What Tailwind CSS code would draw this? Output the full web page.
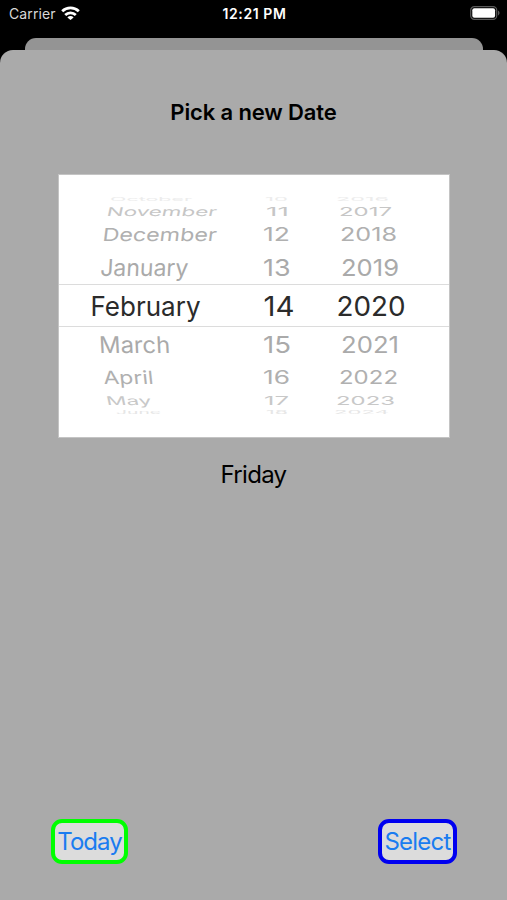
<!DOCTYPE html>
<html lang="en">
<head>
    <meta charset="UTF-8">
    <meta name="viewport" content="width=device-width, initial-scale=1.0">
    <title>Pick a new Date</title>
    <script src="https://cdn.jsdelivr.net/npm/@tailwindcss/browser@4"></script>
</head>
<body class="bg-black h-[900px] overflow-hidden flex flex-col font-['Inter',sans-serif]">
    <!-- Status bar -->
    <header class="h-[38px] shrink-0 grid grid-cols-3 items-start pt-1 pl-[9px] pr-[7px] text-white">
        <div class="flex items-center gap-[5px] h-5 -mt-px">
            <span class="text-[14px] tracking-[0.1px] text-[#d8d8d8]">Carrier</span>
            <svg class="w-[19px] h-[14px] -mt-px" viewBox="0 0 19 14" fill="none" stroke="white" stroke-width="2.8">
                <path d="M1.2 5.3a12 12 0 0 1 16.6 0" />
                <path d="M4.2 8.9a7.7 7.7 0 0 1 10.6 0" />
                <path d="M9.5 14L6.4 11.4a4.4 4.4 0 0 1 6.2 0z" fill="white" stroke="none" />
            </svg>
        </div>
        <span class="text-center text-[14px] leading-5 font-semibold tracking-[0.6px] whitespace-nowrap">12:21 PM</span>
        <svg class="w-[30px] h-[14px] mt-[2px] justify-self-end" viewBox="0 0 30 14">
            <rect x="0.7" y="0.7" width="26" height="12.6" rx="3.6" fill="none" stroke="#5a5a5a" stroke-width="1.2" />
            <rect x="2.3" y="2.3" width="22.8" height="9.4" rx="2" fill="white" />
            <path d="M28 4.6c2 .8 2 4 0 4.8z" fill="#5a5a5a" />
        </svg>
    </header>

    <!-- Card behind the sheet -->
    <div class="h-3 shrink-0 ml-[25px] mr-6 rounded-t-[11px] bg-[#949494]"></div>

    <main class="grow bg-[#aaaaaa] rounded-t-[13px] flex flex-col items-center">
        <h1 class="mt-[47px] text-[22px] leading-[30px] font-semibold tracking-[-0.13px] text-black">Pick a new Date</h1>

        <div class="mt-[47px] w-[392px] h-[264px] bg-white border border-[#c4c4c4]">
            <!-- Date wheel -->
            <svg class="w-[390px] h-[262px]" viewBox="59 175 390 262" fill="#aaaaaa">
                <path d="M59 284.5H449M59 326.5H449" stroke="#dcdcdc" />
                <g font-size="5" fill="#ececec">
                    <text x="110" y="200.5" textLength="82" lengthAdjust="spacingAndGlyphs">October</text>
                    <text x="265" y="200.5" textLength="23" lengthAdjust="spacingAndGlyphs">10</text>
                    <text x="336" y="200.5" textLength="53" lengthAdjust="spacingAndGlyphs">2016</text>
                </g>
                <g font-size="12.2" fill="#c6c6c6">
                    <text transform="translate(106 215.5) skewX(-12)" textLength="110" lengthAdjust="spacingAndGlyphs">November</text>
                    <text x="266" y="215.5" textLength="23" lengthAdjust="spacingAndGlyphs">11</text>
                    <text x="339" y="215.5" textLength="53" lengthAdjust="spacingAndGlyphs">2017</text>
                </g>
                <g font-size="18" fill="#b0b0b0">
                    <text transform="translate(102 241) skewX(-7)" textLength="114" lengthAdjust="spacingAndGlyphs">December</text>
                    <text x="263" y="241" textLength="27" lengthAdjust="spacingAndGlyphs">12</text>
                    <text x="340" y="241" textLength="57" lengthAdjust="spacingAndGlyphs">2018</text>
                </g>
                <g font-size="23.5">
                    <text transform="translate(100 276) skewX(-3)" textLength="88" lengthAdjust="spacingAndGlyphs">January</text>
                    <text x="263" y="276" textLength="27.5" lengthAdjust="spacingAndGlyphs">13</text>
                    <text x="341" y="276" textLength="58" lengthAdjust="spacingAndGlyphs">2019</text>
                </g>
                <g font-size="27" fill="#2b2b2b">
                    <text x="90.5" y="315.5" textLength="110" lengthAdjust="spacingAndGlyphs">February</text>
                    <text x="263.5" y="315.5" textLength="31" lengthAdjust="spacingAndGlyphs">14</text>
                    <text x="336.5" y="315.5" textLength="69" lengthAdjust="spacingAndGlyphs">2020</text>
                </g>
                <g font-size="23">
                    <text transform="translate(99.5 352.5) skewX(3)" textLength="71" lengthAdjust="spacingAndGlyphs">March</text>
                    <text x="263" y="352.5" textLength="28" lengthAdjust="spacingAndGlyphs">15</text>
                    <text x="341" y="352.5" textLength="58" lengthAdjust="spacingAndGlyphs">2021</text>
                </g>
                <g font-size="18.2" fill="#b0b0b0">
                    <text transform="translate(104 383.5) skewX(6)" textLength="50" lengthAdjust="spacingAndGlyphs">April</text>
                    <text x="263" y="383.5" textLength="27" lengthAdjust="spacingAndGlyphs">16</text>
                    <text x="339" y="383.5" textLength="59" lengthAdjust="spacingAndGlyphs">2022</text>
                </g>
                <g font-size="12" fill="#c8c8c8">
                    <text transform="translate(107 405) skewX(12)" textLength="45" lengthAdjust="spacingAndGlyphs">May</text>
                    <text x="264" y="405" textLength="25" lengthAdjust="spacingAndGlyphs">17</text>
                    <text x="336" y="405" textLength="59" lengthAdjust="spacingAndGlyphs">2023</text>
                </g>
                <g font-size="4.5" fill="#e6e6e6">
                    <text x="116" y="414" textLength="45" lengthAdjust="spacingAndGlyphs">June</text>
                    <text x="266" y="414" textLength="22" lengthAdjust="spacingAndGlyphs">18</text>
                    <text x="334" y="414" textLength="55" lengthAdjust="spacingAndGlyphs">2024</text>
                </g>
            </svg>
        </div>

        <p class="mt-[21px] text-[24px] leading-[32px] tracking-[-0.7px] text-black">Friday</p>

        <div class="mt-auto mb-[36px] w-full pl-[51px] pr-[50px] flex justify-between">
            <button class="w-[77px] h-[45px] rounded-[11px] border-4 border-[#00ff00] bg-[#dcdcdc] text-[24px] tracking-[-1px] text-[#1a7cf0] flex items-center justify-center whitespace-nowrap">Today</button>
            <button class="w-[79px] h-[45px] rounded-[11px] border-4 border-[#0000f0] bg-[#dcdcdc] text-[24px] tracking-[-0.8px] text-[#1a7cf0] flex items-center justify-center whitespace-nowrap">Select</button>
        </div>
    </main>
</body>
</html>
